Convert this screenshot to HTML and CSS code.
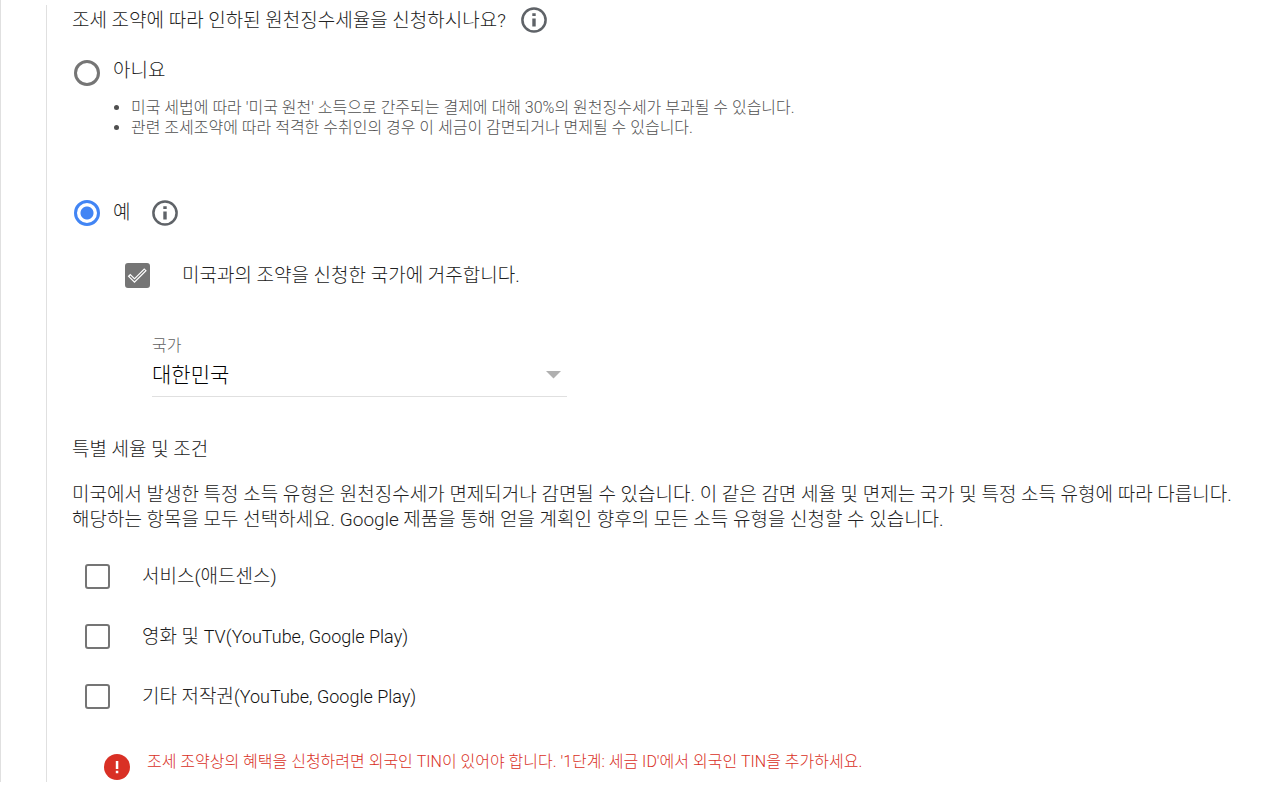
FILE: index.html
```html
<!DOCTYPE html>
<html lang="ko">
<head>
<meta charset="utf-8">
<meta name="viewport" content="width=device-width, initial-scale=1">
<title>조세 조약</title>
<link rel="stylesheet" href="styles.css">
</head>
<body>
<svg class="symbols" aria-hidden="true">
  <symbol id="info" viewBox="0 0 26 26">
    <circle cx="13" cy="13" r="11.6" fill="none" stroke="currentColor" stroke-width="2.5"/>
    <path d="M11.3 6.2h3.4v2.9h-3.4zM11.3 11.6h3.4v7.9h-3.4z" fill="currentColor"/>
  </symbol>
</svg>
<div class="panel">
  <main class="step">
    <div class="question">
      <h1 class="question-text" id="question">조세 조약에 따라 인하된 원천징수세율을 신청하시나요?</h1>
      <button class="info" type="button" aria-label="조세 조약 정보"><svg><use href="#info"/></svg></button>
    </div>

    <div class="choice choice-no">
      <input class="radio" type="radio" name="treaty" id="no">
      <div class="choice-body">
        <label class="label" for="no">아니요</label>
        <ul class="notes">
          <li>미국 세법에 따라 '미국 원천' 소득으로 간주되는 결제에 대해 30%의 원천징수세가 부과될 수 있습니다.</li>
          <li>관련 조세조약에 따라 적격한 수취인의 경우 이 세금이 감면되거나 면제될 수 있습니다.</li>
        </ul>
      </div>
    </div>

    <div class="choice choice-yes">
      <input class="radio" type="radio" name="treaty" id="yes" checked>
      <label class="label" for="yes">예</label>
      <button class="info" type="button" aria-label="신청 정보"><svg><use href="#info"/></svg></button>
    </div>

    <div class="resident">
      <span class="tick">
        <input class="checkbox" type="checkbox" id="resident" checked>
        <svg class="tick-mark" viewBox="0 0 25 25" aria-hidden="true">
          <path d="M4 12l5.5 5.5L20.5 6.5" fill="none" stroke="#fff" stroke-width="3.6"/>
          <path d="M5 13l4.5 4.5L19.8 7.2" fill="none" stroke="#757575" stroke-width="1.2"/>
        </svg>
      </span>
      <label class="label" for="resident">미국과의 조약을 신청한 국가에 거주합니다.</label>
    </div>

    <div class="country">
      <label class="country-label" for="country">국가</label>
      <div class="country-box">
        <select class="country-select" id="country"><option>대한민국</option></select>
        <svg class="arrow" viewBox="0 0 15 8" aria-hidden="true"><path d="M0 0h15L7.5 7.5z" fill="#b0b0b0"/></svg>
      </div>
    </div>

    <h2 class="subtitle">특별 세율 및 조건</h2>
    <p class="text">미국에서 발생한 특정 소득 유형은 원천징수세가 면제되거나 감면될 수 있습니다. 이 같은 감면 세율 및 면제는 국가 및 특정 소득 유형에 따라 다릅니다. 해당하는 항목을 모두 선택하세요. Google 제품을 통해 얻을 계획인 향후의 모든 소득 유형을 신청할 수 있습니다.</p>

    <div class="options">
      <div class="option"><input class="checkbox" type="checkbox" id="services"><label class="label" for="services">서비스(애드센스)</label></div>
      <div class="option"><input class="checkbox" type="checkbox" id="movies"><label class="label" for="movies">영화 및 <span class="latin">TV(YouTube, Google Play)</span></label></div>
      <div class="option"><input class="checkbox" type="checkbox" id="other"><label class="label" for="other">기타 저작권<span class="latin">(YouTube, Google Play)</span></label></div>
    </div>

    <div class="error" role="alert">
      <svg class="error-icon" viewBox="0 0 26 26" aria-hidden="true">
        <circle cx="13" cy="13" r="13" fill="#d93025"/>
        <path d="M11.8 7h2.5v8h-2.5zM11.8 16.8h2.5v2.5h-2.5z" fill="#fff"/>
      </svg>
      <p class="error-text">조세 조약상의 혜택을 신청하려면 외국인 TIN이 있어야 합니다. '1단계: 세금 ID'에서 외국인 TIN을 추가하세요.</p>
    </div>
  </main>
</div>
</body>
</html>
```
FILE: styles.css
```css
* { box-sizing: border-box; }

body {
  margin: 0;
  background: #fff;
  color: #212121;
  font: 300 19px/25px Roboto, "Noto Sans CJK KR", sans-serif;
  word-break: keep-all;
}

.symbols { position: absolute; width: 0; height: 0; }

.latin { color: #111; font-size: 18px; }

.panel {
  border-left: 1px solid #e0e0e0;
  padding: 5px 0 0 45px;
  margin-bottom: 5px;
}

.step {
  border-left: 1px solid #e0e0e0;
  padding: 0 32px 2px 25px;
}

.question { display: flex; align-items: center; gap: 15px; padding-top: 2px; }

.question-text, .subtitle { margin: 0; font-size: 19px; font-weight: 300; }

.info {
  width: 26px;
  height: 26px;
  padding: 0;
  border: 0;
  background: none;
  color: #5f6368;
}

.info svg { display: block; width: 26px; height: 26px; }

.choice { display: flex; }

.choice-no { gap: 13px; margin-top: 25px; }

.choice-yes { align-items: flex-start; gap: 13px; margin-top: 62px; }

.choice-yes .info { margin-left: 9px; }

.label { display: block; }

.radio {
  appearance: none;
  flex: none;
  width: 26px;
  height: 26px;
  margin: 0 0 0 2px;
  border: 3px solid #757575;
  border-radius: 50%;
}

.choice-no .radio { margin-top: 2px; }

.radio:checked {
  border-color: #4285f4;
  background: radial-gradient(circle, #4285f4 6px, transparent 7px);
}

.notes {
  margin: 15px 0 0;
  padding: 0 0 0 18px;
  color: #505050;
  font-size: 16px;
  line-height: 20px;
}

.resident { display: flex; align-items: center; gap: 32px; margin: 37px 0 0 53px; }

.tick { position: relative; display: block; width: 25px; height: 25px; }

.tick-mark { position: absolute; inset: 0; pointer-events: none; }

.checkbox {
  appearance: none;
  display: block;
  flex: none;
  width: 25px;
  height: 25px;
  margin: 0;
  border: 2px solid #757575;
  border-radius: 3px;
}

.checkbox:checked { background: #757575; }

.country { width: 415px; max-width: 100%; margin: 48px 0 0 80px; }

.country-label { display: block; color: #616161; font-size: 16px; line-height: 20px; }

.country-box { position: relative; }

.country-select {
  appearance: none;
  display: block;
  width: 100%;
  height: 41px;
  padding: 0 0 2px;
  border: 0;
  border-bottom: 1px solid #e0e0e0;
  border-radius: 0;
  background: none;
  color: #000;
  font: inherit;
  font-size: 21px;
}

.arrow { position: absolute; top: 15px; right: 6px; width: 15px; height: 8px; pointer-events: none; }

.subtitle { margin-top: 40px; }

.text { margin: 20px 0 0; }

.options { display: grid; gap: 35px; margin: 32px 0 0 13px; }

.option { display: flex; align-items: center; gap: 32px; }

.error { display: flex; gap: 17px; margin: 41px 0 0 32px; }

.error-icon { flex: none; width: 26px; height: 26px; margin-top: 4px; }

.error-text { margin: 0; color: #d93025; font-size: 16px; line-height: 24px; }
```
